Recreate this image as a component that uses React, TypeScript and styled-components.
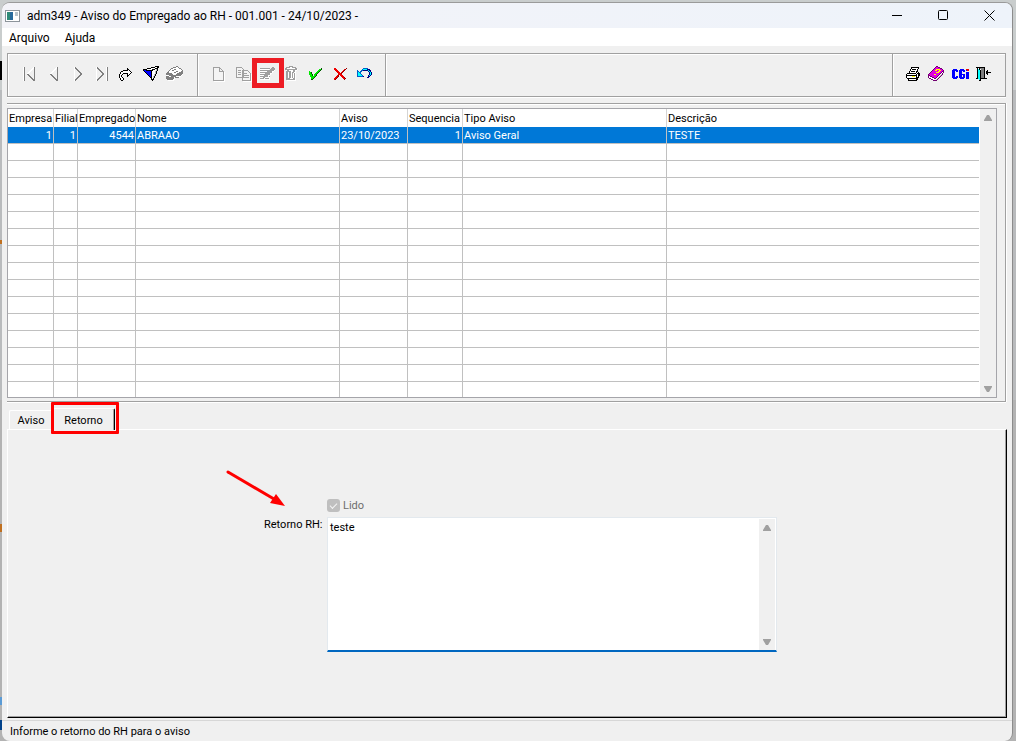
import React from "react";
import styled, { createGlobalStyle, css } from "styled-components";

const GlobalStyle = createGlobalStyle`
  *, *::before, *::after { box-sizing: border-box; }
  html, body { margin: 0; padding: 0; }
  body {
    font-family: Roboto, "Liberation Sans", Arial, sans-serif;
    font-size: 11px;
    line-height: 14px;
    color: #000;
    background: #c3c5c6;
  }
  button, input, textarea { font: inherit; color: inherit; }
`;

const Desktop = styled.div`
  display: flex;
  min-height: 100vh;
  padding: 2px 3px 0 2px;
  background:
    linear-gradient(#000, #000) 0 61px / 2px 19px no-repeat,
    linear-gradient(#c07020, #c07020) 0 240px / 2px 4px no-repeat,
    linear-gradient(#c07020, #c07020) 0 524px / 2px 8px no-repeat,
    linear-gradient(#5b9bd5, #5b9bd5) 0 697px / 2px 8px no-repeat,
    linear-gradient(#00418a, #00418a) 0 720px / 2px 10px no-repeat,
    linear-gradient(#c9cdcd 0 90px, #b9bbbd 90px 400px, #b3b3b3 400px);
`;

const Window = styled.div`
  flex: 1;
  min-width: 0;
  display: flex;
  flex-direction: column;
  background: #f0f0f0;
  border-top: 1px solid #9a9a9a;
  border-right: 1px solid #8c8c8c;
  border-radius: 8px;
  overflow: hidden;
`;

const TitleBar = styled.header`
  display: flex;
  align-items: center;
  height: 25px;
  padding-left: 3px;
  background: linear-gradient(90deg, #f3f3f8, #eef3fa);
`;

const Title = styled.h1`
  flex: 1;
  margin: 0 0 0 7px;
  font: 400 12px/16px Roboto, "Noto Sans", sans-serif;
  white-space: nowrap;
`;

const CaptionButton = styled.button`
  display: grid;
  place-items: center;
  width: 46px;
  height: 25px;
  padding: 0;
  border: 0;
  background: transparent;
`;

const MenuBar = styled.nav`
  display: flex;
  gap: 15px;
  height: 18px;
  padding-left: 7px;
  background: #fff;
`;

const MenuButton = styled.button`
  padding: 1px 0 0;
  border: 0;
  background: transparent;
  font: 400 12px/18px Roboto, "Noto Sans", sans-serif;
`;

const Body = styled.main`
  flex: 1;
  display: flex;
  flex-direction: column;
  padding: 7px 6px 2px 5px;
`;

const Toolbar = styled.div`
  display: flex;
  height: 44px;
  margin-bottom: 6px;
  border: 1px solid #a0a0a0;
  box-shadow: inset 1px 1px #fff, 0 1px #fff;
`;

const ToolGroup = styled.div<{ $start: number; $end?: number; $grow?: boolean }>`
  display: flex;
  align-items: center;
  padding: 0 ${(p) => p.$end ?? 0}px 2px ${(p) => p.$start}px;
  ${(p) => p.$grow && css`flex: 1;`}
  & + & {
    border-left: 1px solid #a0a0a0;
    box-shadow: inset 1px 0 #fff;
  }
`;

const ToolButton = styled.button`
  position: relative;
  width: 24px;
  height: 24px;
  padding: 0;
  border: 0;
  background: transparent;
  svg { display: block; }
`;

const ToolHighlight = styled.span`
  position: absolute;
  z-index: 1;
  top: -4px;
  left: -2px;
  width: 32px;
  height: 30px;
  border: 5px solid #ed1c24;
  pointer-events: none;
`;

const GridFrame = styled.section`
  padding: 4px 8px 3px 0;
  border: 1px solid #a0a0a0;
  border-left: 0;
  box-shadow: inset 0 1px #fff, 0 1px #fff, 1px 0 #fff;
`;

const GridBox = styled.div`
  display: flex;
  height: 290px;
  border: 1px solid #a5a5aa;
  background: #fff;
  overflow: hidden;
`;

const GridScroll = styled.div`
  flex: 1;
  min-width: 0;
  overflow: hidden;
`;

const DataTable = styled.table`
  width: 100%;
  table-layout: fixed;
  border-collapse: separate;
  border-spacing: 0;
`;

const HeadCell = styled.th`
  height: 18px;
  padding: 2px 0 0 1px;
  border-right: 1px solid #d4d4d4;
  font-weight: 400;
  text-align: left;
  white-space: nowrap;
  &:last-child { border-right: 0; }
`;

const Row = styled.tr<{ $selected?: boolean }>`
  background: ${(p) => (p.$selected ? "#0078d7" : "#fff")};
  color: ${(p) => (p.$selected ? "#fff" : "#000")};
`;

const Cell = styled.td<{ $right?: boolean }>`
  height: 17px;
  padding: 2px 1px 0;
  border-right: 1px solid #c0c0c0;
  border-bottom: 1px solid #c0c0c0;
  white-space: nowrap;
  text-align: ${(p) => (p.$right ? "right" : "left")};
  &:last-child { border-right: 0; }
`;

const ScrollTrack = styled.div`
  display: flex;
  flex-direction: column;
  justify-content: space-between;
  width: 16px;
  margin-left: 1px;
  padding-top: 1px;
  background: #f0f0f0;
`;

const ScrollButton = styled.button`
  display: grid;
  place-items: center;
  width: 16px;
  height: 16px;
  padding: 0;
  border: 0;
  background: transparent;
  svg { display: block; }
`;

const TabStrip = styled.div`
  display: flex;
  align-items: flex-end;
  height: 27px;
  padding-left: 2px;
`;

const Tab = styled.button<{ $active?: boolean }>`
  position: relative;
  width: ${(p) => (p.$active ? 62 : 44)}px;
  height: ${(p) => (p.$active ? 22 : 19)}px;
  padding: 2px 1px 0 0;
  border: 0;
  border-top: 1px solid #fff;
  border-left: 1px solid #fff;
  border-radius: 2px 2px 0 0;
  background: #f0f0f0;
  ${(p) =>
    p.$active &&
    css`
      z-index: 1;
      margin-bottom: -1px;
      border-right: 1px solid #000;
      box-shadow: inset -1px 0 #a0a0a0;
    `}
`;

const TabHighlight = styled.span`
  position: absolute;
  top: -7px;
  left: -3px;
  width: 68px;
  height: 32px;
  border: 3px solid #f00;
  border-radius: 1px;
  pointer-events: none;
`;

const TabPanel = styled.section`
  position: relative;
  flex: 1;
  margin-right: -1px;
  padding: 68px 8px 40px 256px;
  border: 1px solid;
  border-color: #fff #000 #000 #fff;
  box-shadow: inset -1px -1px #a0a0a0;
`;

const ArrowMark = styled.svg`
  position: absolute;
  top: 38px;
  left: 216px;
  pointer-events: none;
`;

const Form = styled.form`
  display: grid;
  grid-template-columns: 60px minmax(0, 450px);
  column-gap: 3px;
  row-gap: 5px;
`;

const CheckLabel = styled.label`
  grid-column: 2;
  display: flex;
  align-items: flex-start;
  gap: 3px;
  height: 14px;
  line-height: 16px;
  color: #6d6d6d;
`;

const CheckBox = styled.input`
  appearance: none;
  width: 13px;
  height: 13px;
  margin: 1px 0 0;
  border-radius: 3px;
  background: #bfbfbf;
  display: grid;
  place-items: center;
  &::after {
    content: "";
    width: 7px;
    height: 4px;
    margin-top: -2px;
    border: solid #f4f4f4;
    border-width: 0 0 1px 1px;
    transform: rotate(-45deg);
  }
`;

const FieldLabel = styled.label`
  padding-top: 1px;
  white-space: nowrap;
`;

const TextFrame = styled.div`
  display: flex;
  height: 135px;
  padding: 1px 1px 0;
  border: 1px solid #e3e9ee;
  border-bottom: 2px solid #0067c0;
  background: #fff;
  overflow: hidden;
`;

const TextBox = styled.textarea`
  flex: 1;
  min-width: 0;
  padding: 2px 1px;
  border: 0;
  outline: 0;
  resize: none;
  overflow: hidden;
  background: #fff;
`;

const StatusBar = styled.footer`
  height: 21px;
  padding: 4px 8px 0;
  border-top: 1px solid #d7d7d7;
`;

type ArtProps = { children: React.ReactNode };

const Art = ({ children }: ArtProps) => (
  <svg width="24" height="24" viewBox="0 0 24 24" fill="none" shapeRendering="crispEdges" aria-hidden="true">
    {children}
  </svg>
);

const palette: Record<string, string> = {
  k: "#000",
  w: "#fff",
  g: "#a0a0a0",
  d: "#808080",
  s: "#c0c0c0",
  b: "#0000ff",
  n: "#000080",
  u: "#0060c8",
  c: "#00ffff",
  m: "#e000e0",
  p: "#700070",
  y: "#ffff00",
  r: "#f00000",
  q: "#900000",
  e: "#00e800",
  f: "#005800",
};

/* Draws a small bitmap icon, one character for each dot. */
const Dots = ({ x, y, rows }: { x: number; y: number; rows: string[] }) => (
  <Art>
    {rows.flatMap((row, j) =>
      row.split("").map((dot, i) =>
        palette[dot] ? <rect key={`${j}-${i}`} x={x + i} y={y + j} width="1" height="1" fill={palette[dot]} /> : null
      )
    )}
  </Art>
);

const icons = {
  first: (
    <Dots
      x={6}
      y={5}
      rows={[
        "wd........wd",
        "wd.......wwd",
        "wd......ww.d",
        "wd.....ww..d",
        "wd....ww...d",
        "wd...ww....d",
        "wd..ww.....d",
        "wd..dd.....d",
        "wd...dd....d",
        "wd....dd...d",
        "wd.....dd..d",
        "wd......dd.d",
        "wd.......ddd",
        "wd........dd",
      ]}
    />
  ),
  previous: (
    <Dots
      x={8}
      y={5}
      rows={[
        ".......wd",
        "......wwd",
        ".....ww.d",
        "....ww..d",
        "...ww...d",
        "..ww....d",
        ".ww.....d",
        ".dd.....d",
        "..dd....d",
        "...dd...d",
        "....dd..d",
        ".....dd.d",
        "......ddd",
        ".......dd",
      ]}
    />
  ),
  next: (
    <Dots
      x={9}
      y={5}
      rows={[
        "wd.......",
        "wdd......",
        "w.dd.....",
        "w..dd....",
        "w...dd...",
        "w....dd..",
        "w.....dd.",
        "w.....dd.",
        "w....dd..",
        "w...dd...",
        "w..dd....",
        "w.dd.....",
        "wdd......",
        "wd.......",
      ]}
    />
  ),
  last: (
    <Dots
      x={7}
      y={5}
      rows={[
        "wd........wd",
        "wdd.......wd",
        "w.dd......wd",
        "w..dd.....wd",
        "w...dd....wd",
        "w....dd...wd",
        "w.....dd..wd",
        "w.....dd..wd",
        "w....dd...wd",
        "w...dd....wd",
        "w..dd.....wd",
        "w.dd......wd",
        "wdd.......wd",
        "wd........wd",
      ]}
    />
  ),
  refresh: (
    <Dots
      x={6}
      y={6}
      rows={[
        "........k....",
        "........kk...",
        "....kkkkkwk..",
        "..kkwwwwwwwk.",
        ".kwwwwwwwwwwk",
        ".kwwkkkkkwwk.",
        "kwwk....kwk..",
        "kwk.....kk...",
        "kwk.....k....",
        "kwwk.........",
        ".kwwk........",
        ".kwwk........",
        "..kk.........",
      ]}
    />
  ),
  filter: (
    <Dots
      x={6}
      y={4}
      rows={[
        "............kkkk",
        "........kkkkwwkk",
        "....kkkkwwwwkkk.",
        "kkkkwwwwwkkkwsk.",
        "kbbkkkkkkkwwwsk.",
        ".kbbbbbbkwwwsk..",
        "..kbbbbbkwwwsk..",
        "...kbbbbkwwwsk..",
        "....kbbbkwwsk...",
        ".....kbbkwwsk...",
        "......kbkwsk....",
        ".......kkwsk....",
        "........kwk.....",
        "........kkk.....",
        ".........k......",
      ]}
    />
  ),
  erase: (
    <Dots
      x={5}
      y={4}
      rows={[
        "..........dd.....",
        ".......dddwwd....",
        ".....ddwwwwwwdd..",
        "....dwwwddwwwwwd.",
        "...dwwddwwwwwwwwd",
        "..dwwwwwwwddwwwdd",
        ".ddwwwwwddwwwdddd",
        "ddddddwwwwwdddddd",
        "dddddddwwwddddddw",
        "wwwddddddddddddw.",
        "dddwwdddddwwwww..",
        "ddddddddwddddw...",
        "ddddddddw........",
        ".ddddddww........",
        "..wwwwww.........",
      ]}
    />
  ),
  create: (
    <Art>
      <path d="M7.500 5.500h6l4 4v9h-10zM13.500 5.500v4h4" fill="#f4f4f4" stroke="#a0a0a0" />
      <path d="M8 19.500h10.500V10" stroke="#fff" />
    </Art>
  ),
  copy: (
    <Art>
      <path d="M6.500 5.500h5l2 2v8h-7zM12.500 8.500h5l3 3v7h-8z" fill="#f4f4f4" stroke="#a0a0a0" />
      <path d="M8 8.500h3M8 10.500h3M8 12.500h3M14 11.500h3M14 13.500h5M14 15.500h5" stroke="#a0a0a0" />
      <path d="M13 19.500h8.500V12" stroke="#fff" />
    </Art>
  ),
  edit: (
    <Dots
      x={6}
      y={5}
      rows={[
        "............gg.",
        "gggggggggg.gggg",
        "wwwwwwwww.ggggg",
        "ggggggggggggggw",
        "wwwwwwwgggggww.",
        "ggggggggggggw..",
        "wwwwwgggggww...",
        "ggggggggggw....",
        "wwwwggggww.....",
        "ggggggggwg.....",
        "wwwggwwwww.....",
        "ggggwggggw.....",
        "wwwwwwwwww.....",
      ]}
    />
  ),
  remove: (
    <Dots
      x={6}
      y={4}
      rows={[
        ".....gggg....",
        "..ggggwwgggg.",
        ".ggwwwwwwwwgg",
        ".ggggggggggggw",
        "..wggwwwwggww",
        "..gggggwwggw.",
        "..ggwggwggww.",
        "..ggwggwgwgw.",
        "..ggwggwgwgw.",
        "..ggwggwgwgw.",
        "..ggwggwgwgw.",
        "..ggwggwgwgw.",
        "..ggggwwwggw.",
        "..gggggggggw.",
        "...wwwwwwwww.",
      ]}
    />
  ),
  confirm: (
    <Dots
      x={7}
      y={6}
      rows={[
        "............f",
        "..........eef",
        ".........eef.",
        "e.......eef..",
        "eef....eef...",
        "eef...eef....",
        "eeef.eef.....",
        ".eef.eef.....",
        ".eeeeef......",
        "..eeef.......",
        "..eef........",
        "..ff.........",
      ]}
    />
  ),
  cancel: (
    <Dots
      x={8}
      y={6}
      rows={[
        "rr..........q",
        "rrr.......rq.",
        ".rrr.....rq..",
        "..rrr...rq...",
        "...rrr.rq....",
        "....rrrq.....",
        "....rrrr.....",
        "...rq.rrr....",
        "..rrq..rrr...",
        ".rrq....rrq..",
        "rrq......rrq.",
        "rq........q..",
      ]}
    />
  ),
  undo: (
    <Dots
      x={7}
      y={6}
      rows={[
        "......uuuuu....",
        ".....uccccnnn..",
        "u...uunnnnncnn.",
        "uu.uu......ncn.",
        "ucuu........ncn",
        "uccu........ncn",
        "ucccu.......ncn",
        "uccccu.....ncn.",
        "uuuuuun....nn..",
        "..........nn...",
      ]}
    />
  ),
  print: (
    <Dots
      x={5}
      y={5}
      rows={[
        ".....kkkkkkkk.",
        ".....kwwwwwwk.",
        "....kwkkkkwk..",
        "....kwwwwwwk..",
        "...kwkkkkwkk..",
        "...kwwwwwwkwk.",
        ".kkkkkkkkkwkkk",
        "kwwwwwwwwwkwkk",
        "kkkkkkkkkkkwkk",
        "kwwwwwyyywkwk.",
        "kwwwwwwwwwkkk.",
        ".kkkkkkkkkkk..",
        "..kwwwwwwwkk..",
        "..kkkkkkkkk...",
      ]}
    />
  ),
  help: (
    <Dots
      x={3}
      y={4}
      rows={[
        "........pp......",
        ".......pmmpp....",
        "......pmmmmmpp..",
        ".....pmmyyyymmp.",
        "....pmmyymmyymmp",
        "...pmmmmmmyymmpp",
        "..pmmmmmyyymmpwp",
        ".pmmmmmmmmmmpwp.",
        "pmmmmmyymmmpwsp.",
        "ppmmmmmmmmpwsp..",
        "pwppmmmmmpwsp...",
        "pwwwppmmpwsp....",
        ".ppwwwppwsp.....",
        "...ppwwwsp......",
        ".....pppp.......",
      ]}
    />
  ),
  cgi: (
    <Dots
      x={3}
      y={7}
      rows={[
        ".bbbb...bbbb..rrr",
        "bbbbbb.bbbbbb.brr",
        "bbb.bb.bbb.bb....",
        "bbb....bbb....bbb",
        "bbb....bbb....bbb",
        "bbb....bbbbbb.bbb",
        "bbb....bbb.bb.bbb",
        "bbb.bb.bbb.bb.bbb",
        "bbbbbb.bbbbbb.bbb",
        ".bbbb...bbbb..bbb",
      ]}
    />
  ),
  exit: (
    <Dots
      x={3}
      y={5}
      rows={[
        "kkkkkkkkk......",
        ".kwkddddk......",
        ".kckwdddk......",
        ".kcckdddk..k...",
        ".kcckdddk.kk...",
        ".kcckdddk.kkkkk",
        ".kcckdddk.kk...",
        ".kcckdddk..k...",
        ".kcckdddk......",
        ".kcckdddk......",
        ".kcckdddk......",
        "kkcckkkkkkk....",
        "...ck..........",
        "...kk..........",
      ]}
    />
  ),
};

type Tool = { label: string; icon: keyof typeof icons; marked?: boolean };

const navigationTools: Tool[] = [
  { label: "Primeiro", icon: "first" },
  { label: "Anterior", icon: "previous" },
  { label: "Próximo", icon: "next" },
  { label: "Último", icon: "last" },
  { label: "Atualizar", icon: "refresh" },
  { label: "Filtrar", icon: "filter" },
  { label: "Limpar filtro", icon: "erase" },
];

const editingTools: Tool[] = [
  { label: "Novo", icon: "create" },
  { label: "Copiar", icon: "copy" },
  { label: "Editar", icon: "edit", marked: true },
  { label: "Excluir", icon: "remove" },
  { label: "Confirmar", icon: "confirm" },
  { label: "Cancelar", icon: "cancel" },
  { label: "Desfazer", icon: "undo" },
];

const systemTools: Tool[] = [
  { label: "Imprimir", icon: "print" },
  { label: "Manual", icon: "help" },
  { label: "CGI", icon: "cgi" },
  { label: "Sair", icon: "exit" },
];

const renderTools = (tools: Tool[]) =>
  tools.map((tool) => (
    <ToolButton key={tool.label} type="button" aria-label={tool.label}>
      {icons[tool.icon]}
      {tool.marked && <ToolHighlight />}
    </ToolButton>
  ));

const columns = [
  { name: "Empresa", width: 46, value: "1", right: true },
  { name: "Filial", width: 24, value: "1", right: true },
  { name: "Empregado", width: 58, value: "4544", right: true },
  { name: "Nome", width: 204, value: "ABRAAO" },
  { name: "Aviso", width: 68, value: "23/10/2023" },
  { name: "Sequencia", width: 55, value: "1", right: true },
  { name: "Tipo Aviso", width: 204, value: "Aviso Geral" },
  { name: "Descrição", value: "TESTE" },
];

const emptyRows = Array.from({ length: 15 }, (_, i) => i);

const VerticalScroll = () => (
  <ScrollTrack>
    <ScrollButton type="button" aria-label="Rolar para cima">
      <svg width="8" height="6" viewBox="0 0 8 6"><path d="M3 0h2l3 5v1H0V5z" fill="#a0a0a0" /></svg>
    </ScrollButton>
    <ScrollButton type="button" aria-label="Rolar para baixo">
      <svg width="8" height="6" viewBox="0 0 8 6"><path d="M0 0h8v1L5 6H3L0 1z" fill="#a0a0a0" /></svg>
    </ScrollButton>
  </ScrollTrack>
);

export default function App() {
  return (
    <Desktop>
      <GlobalStyle />
      <Window>
        <TitleBar>
          <svg width="15" height="12" viewBox="0 0 15 12" shapeRendering="crispEdges" aria-hidden="true">
            <path d="M0 0h15v12H0z" fill="#8d949b" />
            <path d="M1 1h13v10H1z" fill="#fff" />
            <path d="M2 2h6v8H2z" fill="#2f8a78" />
            <path d="M5 2h3v8H5z" fill="#286a9c" />
            <path d="M10 2h3v4h-3z" fill="#b9c4cc" />
          </svg>
          <Title>adm349 - Aviso do Empregado ao RH - 001.001 - 24/10/2023 -</Title>
          <CaptionButton type="button" aria-label="Minimizar">
            <svg width="11" height="11" viewBox="0 0 11 11"><path d="M0 5.500h10" stroke="#000" /></svg>
          </CaptionButton>
          <CaptionButton type="button" aria-label="Maximizar">
            <svg width="11" height="11" viewBox="0 0 11 11"><rect x=".5" y=".5" width="9" height="9" rx="1" fill="none" stroke="#000" /></svg>
          </CaptionButton>
          <CaptionButton type="button" aria-label="Fechar">
            <svg width="11" height="11" viewBox="0 0 11 11"><path d="M.5.5l10 10M10.500.5l-10 10" stroke="#000" /></svg>
          </CaptionButton>
        </TitleBar>
        <MenuBar>
          <MenuButton type="button">Arquivo</MenuButton>
          <MenuButton type="button">Ajuda</MenuButton>
        </MenuBar>
        <Body>
          <Toolbar>
            <ToolGroup $start={9} $end={12}>{renderTools(navigationTools)}</ToolGroup>
            <ToolGroup $start={8} $end={11}>{renderTools(editingTools)}</ToolGroup>
            <ToolGroup $start={0} $grow />
            <ToolGroup $start={8} $end={8}>{renderTools(systemTools)}</ToolGroup>
          </Toolbar>
          <GridFrame>
            <GridBox>
              <GridScroll>
                <DataTable>
                  <colgroup>
                    {columns.map((c) => <col key={c.name} width={c.width} />)}
                  </colgroup>
                  <thead>
                    <tr>
                      {columns.map((c) => <HeadCell key={c.name} scope="col">{c.name}</HeadCell>)}
                    </tr>
                  </thead>
                  <tbody>
                    <Row $selected>
                      {columns.map((c) => <Cell key={c.name} $right={c.right}>{c.value}</Cell>)}
                    </Row>
                    {emptyRows.map((r) => (
                      <Row key={r}>
                        {columns.map((c) => <Cell key={c.name} />)}
                      </Row>
                    ))}
                  </tbody>
                </DataTable>
              </GridScroll>
              <VerticalScroll />
            </GridBox>
          </GridFrame>
          <TabStrip role="tablist">
            <Tab type="button" role="tab" aria-selected="false">Aviso</Tab>
            <Tab type="button" role="tab" aria-selected="true" $active>
              Retorno
              <TabHighlight />
            </Tab>
          </TabStrip>
          <TabPanel role="tabpanel">
            <ArrowMark width="64" height="42" viewBox="0 0 64 42" aria-hidden="true">
              <path d="M4 4l46 27" stroke="#f00" strokeWidth="3" strokeLinecap="round" />
              <path d="M61 38l-15-3 6-9z" fill="#f00" />
            </ArrowMark>
            <Form>
              <CheckLabel>
                <CheckBox type="checkbox" defaultChecked disabled />
                Lido
              </CheckLabel>
              <FieldLabel htmlFor="retorno">Retorno RH:</FieldLabel>
              <TextFrame>
                <TextBox id="retorno" defaultValue="teste" />
                <VerticalScroll />
              </TextFrame>
            </Form>
          </TabPanel>
        </Body>
        <StatusBar>Informe o retorno do RH para o aviso</StatusBar>
      </Window>
    </Desktop>
  );
}
